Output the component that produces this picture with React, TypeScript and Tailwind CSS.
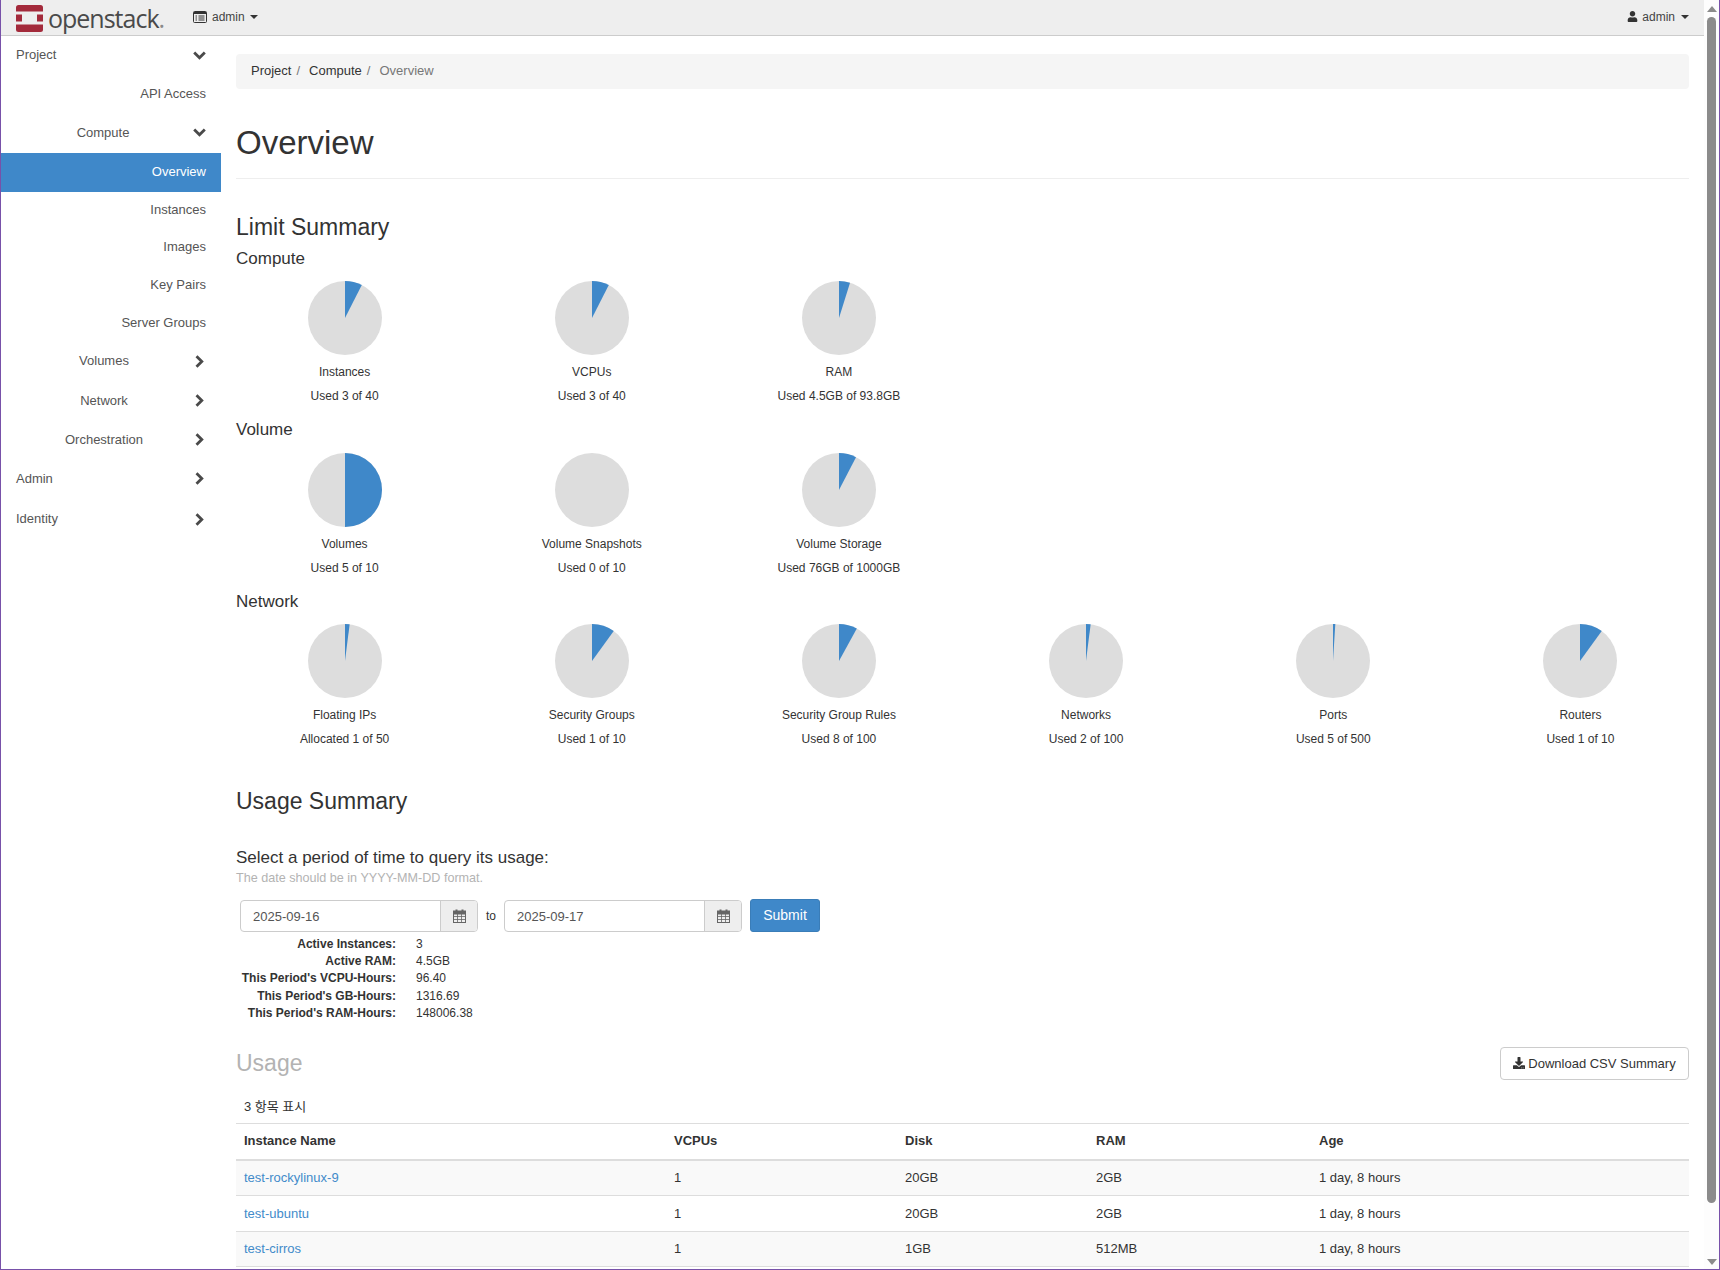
import { FaDownload, FaUser } from "react-icons/fa";

const FONT = "font-['Liberation_Sans',Arial,'Noto_Sans_CJK_KR',sans-serif]";

type NavRow = { label: string; h: string; kind: "top" | "parent" | "leaf"; chevron?: "down" | "right"; active?: boolean };

const navRows: NavRow[] = [
  { label: "Project", h: "h-[38px]", kind: "top", chevron: "down" },
  { label: "API Access", h: "h-[40px]", kind: "leaf" },
  { label: "Compute", h: "h-[39px] pb-[2px]", kind: "parent", chevron: "down" },
  { label: "Overview", h: "h-[39px] pb-[2px]", kind: "leaf", active: true },
  { label: "Instances", h: "h-[36px]", kind: "leaf" },
  { label: "Images", h: "h-[39px] pb-[2px]", kind: "leaf" },
  { label: "Key Pairs", h: "h-[37px] pb-[2px]", kind: "leaf" },
  { label: "Server Groups", h: "h-[38px]", kind: "leaf" },
  { label: "Volumes", h: "h-[40px] pb-[2px]", kind: "parent", chevron: "right" },
  { label: "Network", h: "h-[39px] pb-[2px]", kind: "parent", chevron: "right" },
  { label: "Orchestration", h: "h-[39px] pb-[2px]", kind: "parent", chevron: "right" },
  { label: "Admin", h: "h-[39px] pb-[2px]", kind: "top", chevron: "right" },
  { label: "Identity", h: "h-[40px]", kind: "top", chevron: "right" },
];

type PieData = { title: string; used: string; pct: number };

const compute: PieData[] = [
  { title: "Instances", used: "Used 3 of 40", pct: 7.5 },
  { title: "VCPUs", used: "Used 3 of 40", pct: 7.5 },
  { title: "RAM", used: "Used 4.5GB of 93.8GB", pct: 4.8 },
];
const volume: PieData[] = [
  { title: "Volumes", used: "Used 5 of 10", pct: 50 },
  { title: "Volume Snapshots", used: "Used 0 of 10", pct: 0 },
  { title: "Volume Storage", used: "Used 76GB of 1000GB", pct: 7.6 },
];
const network: PieData[] = [
  { title: "Floating IPs", used: "Allocated 1 of 50", pct: 2 },
  { title: "Security Groups", used: "Used 1 of 10", pct: 10 },
  { title: "Security Group Rules", used: "Used 8 of 100", pct: 8 },
  { title: "Networks", used: "Used 2 of 100", pct: 2 },
  { title: "Ports", used: "Used 5 of 500", pct: 1 },
  { title: "Routers", used: "Used 1 of 10", pct: 10 },
];

const stats = [
  ["Active Instances:", "3"],
  ["Active RAM:", "4.5GB"],
  ["This Period's VCPU-Hours:", "96.40"],
  ["This Period's GB-Hours:", "1316.69"],
  ["This Period's RAM-Hours:", "148006.38"],
];

const rows = [
  { name: "test-rockylinux-9", vcpus: "1", disk: "20GB", ram: "2GB", age: "1 day, 8 hours", h: "h-[35px]", bg: "bg-[#f9f9f9]" },
  { name: "test-ubuntu", vcpus: "1", disk: "20GB", ram: "2GB", age: "1 day, 8 hours", h: "h-[36px]", bg: "bg-white" },
  { name: "test-cirros", vcpus: "1", disk: "1GB", ram: "512MB", age: "1 day, 8 hours", h: "h-[35px]", bg: "bg-[#f9f9f9]" },
];

function Pie({ pct }: { pct: number }) {
  const a = (pct / 100) * Math.PI * 2;
  const x = 37 + 37 * Math.sin(a);
  const y = 37 - 37 * Math.cos(a);
  return (
    <svg width="74" height="74" viewBox="0 0 74 74">
      <circle cx="37" cy="37" r="37" fill="#dddddd" />
      {pct > 0 && <path d={`M37 37 L37 0 A37 37 0 ${pct > 50 ? 1 : 0} 1 ${x} ${y} Z`} fill="#3f88c9" />}
    </svg>
  );
}

function PieRow({ items }: { items: PieData[] }) {
  return (
    <div className="grid grid-cols-6 -mx-[15px]">
      {items.map((p) => (
        <div key={p.title} className="flex flex-col items-center text-[12px] text-[#333]">
          <Pie pct={p.pct} />
          <div className="mt-[9px] h-[17px] leading-[17px]">{p.title}</div>
          <div className="mt-[7px] h-[17px] leading-[17px]">{p.used}</div>
        </div>
      ))}
    </div>
  );
}

function CalendarIcon() {
  return (
    <svg width="13" height="14" viewBox="0 0 13 14" fill="none" stroke="#666666" strokeWidth="1">
      <rect x="0.5" y="2.5" width="12" height="11" />
      <rect x="0.5" y="2" width="12" height="3" fill="#666666" />
      <path d="M3.5 0.5V3.5M9.5 0.5V3.5" strokeWidth="2" />
      <path d="M4.5 5V13M8.5 5V13M1 7.5H12M1 10.5H12" strokeWidth="0.8" />
    </svg>
  );
}

function DateInput({ value }: { value: string }) {
  return (
    <div className="flex h-[32px] w-[238px] rounded-[4px] border border-[#cccccc] bg-white">
      <div className="flex-1 pl-[12px] text-[13px] leading-[31px] text-[#555]">{value}</div>
      <div className="flex w-[37px] items-center justify-center rounded-r-[3px] border-l border-[#cccccc] bg-[#eeeeee]">
        <CalendarIcon />
      </div>
    </div>
  );
}

function Logo() {
  return (
    <div className="flex items-center">
      <svg width="27" height="27" viewBox="0 0 27 27" className="mt-[2px]">
        <rect width="27" height="27" rx="2.5" fill="#a32a3b" />
        <rect x="0" y="6.5" width="27" height="13" fill="#eeeeee" />
        <rect x="0" y="9.5" width="6" height="7" fill="#a32a3b" />
        <rect x="21" y="9.5" width="6" height="7" fill="#a32a3b" />
      </svg>
      <span className="ml-[5px] font-['Open_Sans',sans-serif] text-[25px] font-medium leading-[30px] tracking-[-1px] text-[#4a4a4a]">
        openstack<span className="text-[#8a8a8a]">.</span>
      </span>
    </div>
  );
}

function ListIcon() {
  return (
    <svg width="14" height="12" viewBox="0 0 14 12" fill="none" stroke="#333333">
      <rect x="0.5" y="0.5" width="13" height="11" rx="1" />
      <path d="M1 2H13" strokeWidth="2" />
      <path d="M2.5 5H4M5.5 5H11.5M2.5 7H4M5.5 7H11.5M2.5 9H4M5.5 9H11.5" strokeWidth="1" />
    </svg>
  );
}

function Chevron({ dir }: { dir: "down" | "right" }) {
  if (dir === "down") {
    return (
      <svg width="13" height="9" viewBox="0 0 13 9" fill="none" stroke="#4a4a4a" strokeWidth="2.8">
        <path d="M1.2 1.5L6.5 6.8L11.8 1.5" />
      </svg>
    );
  }
  return (
    <svg width="9" height="13" viewBox="0 0 9 13" fill="none" stroke="#4a4a4a" strokeWidth="2.8" className="mr-[2px]">
      <path d="M1.5 1.2L6.8 6.5L1.5 11.8" />
    </svg>
  );
}

export default function App() {
  return (
    <div className={`${FONT} flex h-[1270px] w-[1720px] overflow-hidden border-b border-l border-r border-[#7851a9] bg-white text-[#333]`}>
      <div className="flex min-w-0 flex-1 flex-col">
        {/* Top bar */}
        <div className="flex h-[36px] shrink-0 items-center border-b border-[#cccccc] bg-[#eeeeee] text-[12px]">
          <div className="ml-[15px] w-[177px]">
            <Logo />
          </div>
          <div className="mb-[2px] flex items-center text-[#444]">
            <ListIcon />
            <span className="ml-[5px]">admin</span>
            <span className="ml-[5px] h-0 w-0 border-x-[4px] border-t-[4px] border-x-transparent border-t-[#333]" />
          </div>
          <div className="mb-[2px] ml-auto mr-[15px] flex items-center text-[#444]">
            <FaUser className="h-[11px] w-[11px] text-[#333]" />
            <span className="ml-[4px]">admin</span>
            <span className="ml-[6px] h-0 w-0 border-x-[4px] border-t-[4px] border-x-transparent border-t-[#333]" />
          </div>
        </div>

        <div className="flex min-h-0 flex-1">
          {/* Sidebar */}
          <nav className="w-[220px] shrink-0 text-[13px] text-[#555]">
            {navRows.map((r) => (
              <div
                key={r.label}
                className={`flex items-center ${r.h} ${r.active ? "bg-[#3f88c9] text-white" : ""} ${r.kind === "leaf" ? "justify-end pr-[15px]" : "pl-[15px] pr-[15px]"}`}
              >
                <span className={r.kind === "parent" ? "flex-1 pr-[3px] text-center" : r.kind === "top" ? "flex-1" : ""}>{r.label}</span>
                {r.chevron && <Chevron dir={r.chevron} />}
              </div>
            ))}
          </nav>

          {/* Main */}
          <main className="min-w-0 flex-1 pl-[15px] pr-[15px]">
            <div className="mt-[18px] flex h-[35px] items-center rounded-[4px] bg-[#f5f5f5] px-[15px] pb-[2px] text-[13px]">
              <span>Project</span>
              <span className="ml-[5px] mr-[9px] text-[#777]">/</span>
              <span>Compute</span>
              <span className="ml-[5px] mr-[9px] text-[#777]">/</span>
              <span className="text-[#777]">Overview</span>
            </div>

            <h1 className="mt-[34px] h-[40px] text-[33px] leading-[40px]">Overview</h1>
            <div className="mt-[15px] border-b border-[#eeeeee]" />

            <h2 className="mt-[34px] h-[28px] text-[23px] leading-[28px]">Limit Summary</h2>
            <h3 className="mt-[8px] h-[20px] text-[17px] leading-[20px]">Compute</h3>
            <div className="mt-[12px]">
              <PieRow items={compute} />
            </div>
            <h3 className="mt-[15px] h-[20px] text-[17px] leading-[20px]">Volume</h3>
            <div className="mt-[13px]">
              <PieRow items={volume} />
            </div>
            <h3 className="mt-[15px] h-[20px] text-[17px] leading-[20px]">Network</h3>
            <div className="mt-[12px]">
              <PieRow items={network} />
            </div>

            <h2 className="mt-[39px] h-[28px] text-[23px] leading-[28px]">Usage Summary</h2>
            <div className="mt-[33px] h-[20px] text-[17px] leading-[20px]">Select a period of time to query its usage:</div>
            <div className="h-[20px] text-[12.6px] leading-[20px] text-[#b3b3b3]">The date should be in YYYY-MM-DD format.</div>

            <div className="ml-[4px] mt-[11px] flex items-center">
              <DateInput value="2025-09-16" />
              <span className="w-[26px] text-center text-[12px]">to</span>
              <DateInput value="2025-09-17" />
              <button className="ml-[8px] h-[33px] w-[70px] rounded-[3px] border border-[#3a7db8] bg-[#3f88c9] text-[14px] font-medium text-white">Submit</button>
            </div>

            <div className="mt-[4px] text-[12px]">
              {stats.map(([k, v]) => (
                <div key={k} className="flex h-[17.2px] leading-[17.2px]">
                  <div className="w-[160px] text-right font-bold">{k}</div>
                  <div className="ml-[20px]">{v}</div>
                </div>
              ))}
            </div>

            <div className="mt-[25px] flex h-[33px] items-center justify-between">
              <div className="text-[23px] leading-[28px] text-[#b3b3b3]">Usage</div>
              <button className="flex h-[33px] w-[189px] items-center justify-center rounded-[4px] border border-[#cccccc] bg-white text-[13px]">
                <FaDownload className="mr-[3px] h-[12px] w-[12px]" />
                Download CSV Summary
              </button>
            </div>

            <div className="mt-[18px] h-[17px] pl-[8px] text-[13px] leading-[17px]">3 항목 표시</div>
            <table className="mt-[8px] w-full table-fixed border-collapse text-[13px]">
              <colgroup>
                <col className="w-[430px]" />
                <col className="w-[231px]" />
                <col className="w-[191px]" />
                <col className="w-[223px]" />
                <col />
              </colgroup>
              <thead>
                <tr className="h-[37px] border-t border-b-2 border-t-[#dddddd] border-b-[#dddddd] text-left font-bold">
                  {["Instance Name", "VCPUs", "Disk", "RAM", "Age"].map((h) => (
                    <th key={h} className="px-[8px] pb-[2px] font-bold">{h}</th>
                  ))}
                </tr>
              </thead>
              <tbody>
                {rows.map((r) => (
                  <tr key={r.name} className={`${r.h} ${r.bg} border-b border-[#dddddd]`}>
                    <td className="px-[8px] text-[#428bca]">{r.name}</td>
                    <td className="px-[8px]">{r.vcpus}</td>
                    <td className="px-[8px]">{r.disk}</td>
                    <td className="px-[8px]">{r.ram}</td>
                    <td className="px-[8px]">{r.age}</td>
                  </tr>
                ))}
              </tbody>
            </table>
          </main>
        </div>
      </div>

      {/* Scrollbar */}
      <div className="flex w-[15px] shrink-0 flex-col items-center bg-[#fdfdfd]">
        <div className="mt-[6px] h-0 w-0 border-x-[5px] border-b-[6px] border-x-transparent border-b-[#8b8b8b]" />
        <div className="mt-[5px] h-[1186px] w-[9px] rounded-full bg-[#8b8b8b]" />
        <div className="mt-auto mb-[4px] h-0 w-0 border-x-[5px] border-t-[6px] border-x-transparent border-t-[#8b8b8b]" />
      </div>
    </div>
  );
}
